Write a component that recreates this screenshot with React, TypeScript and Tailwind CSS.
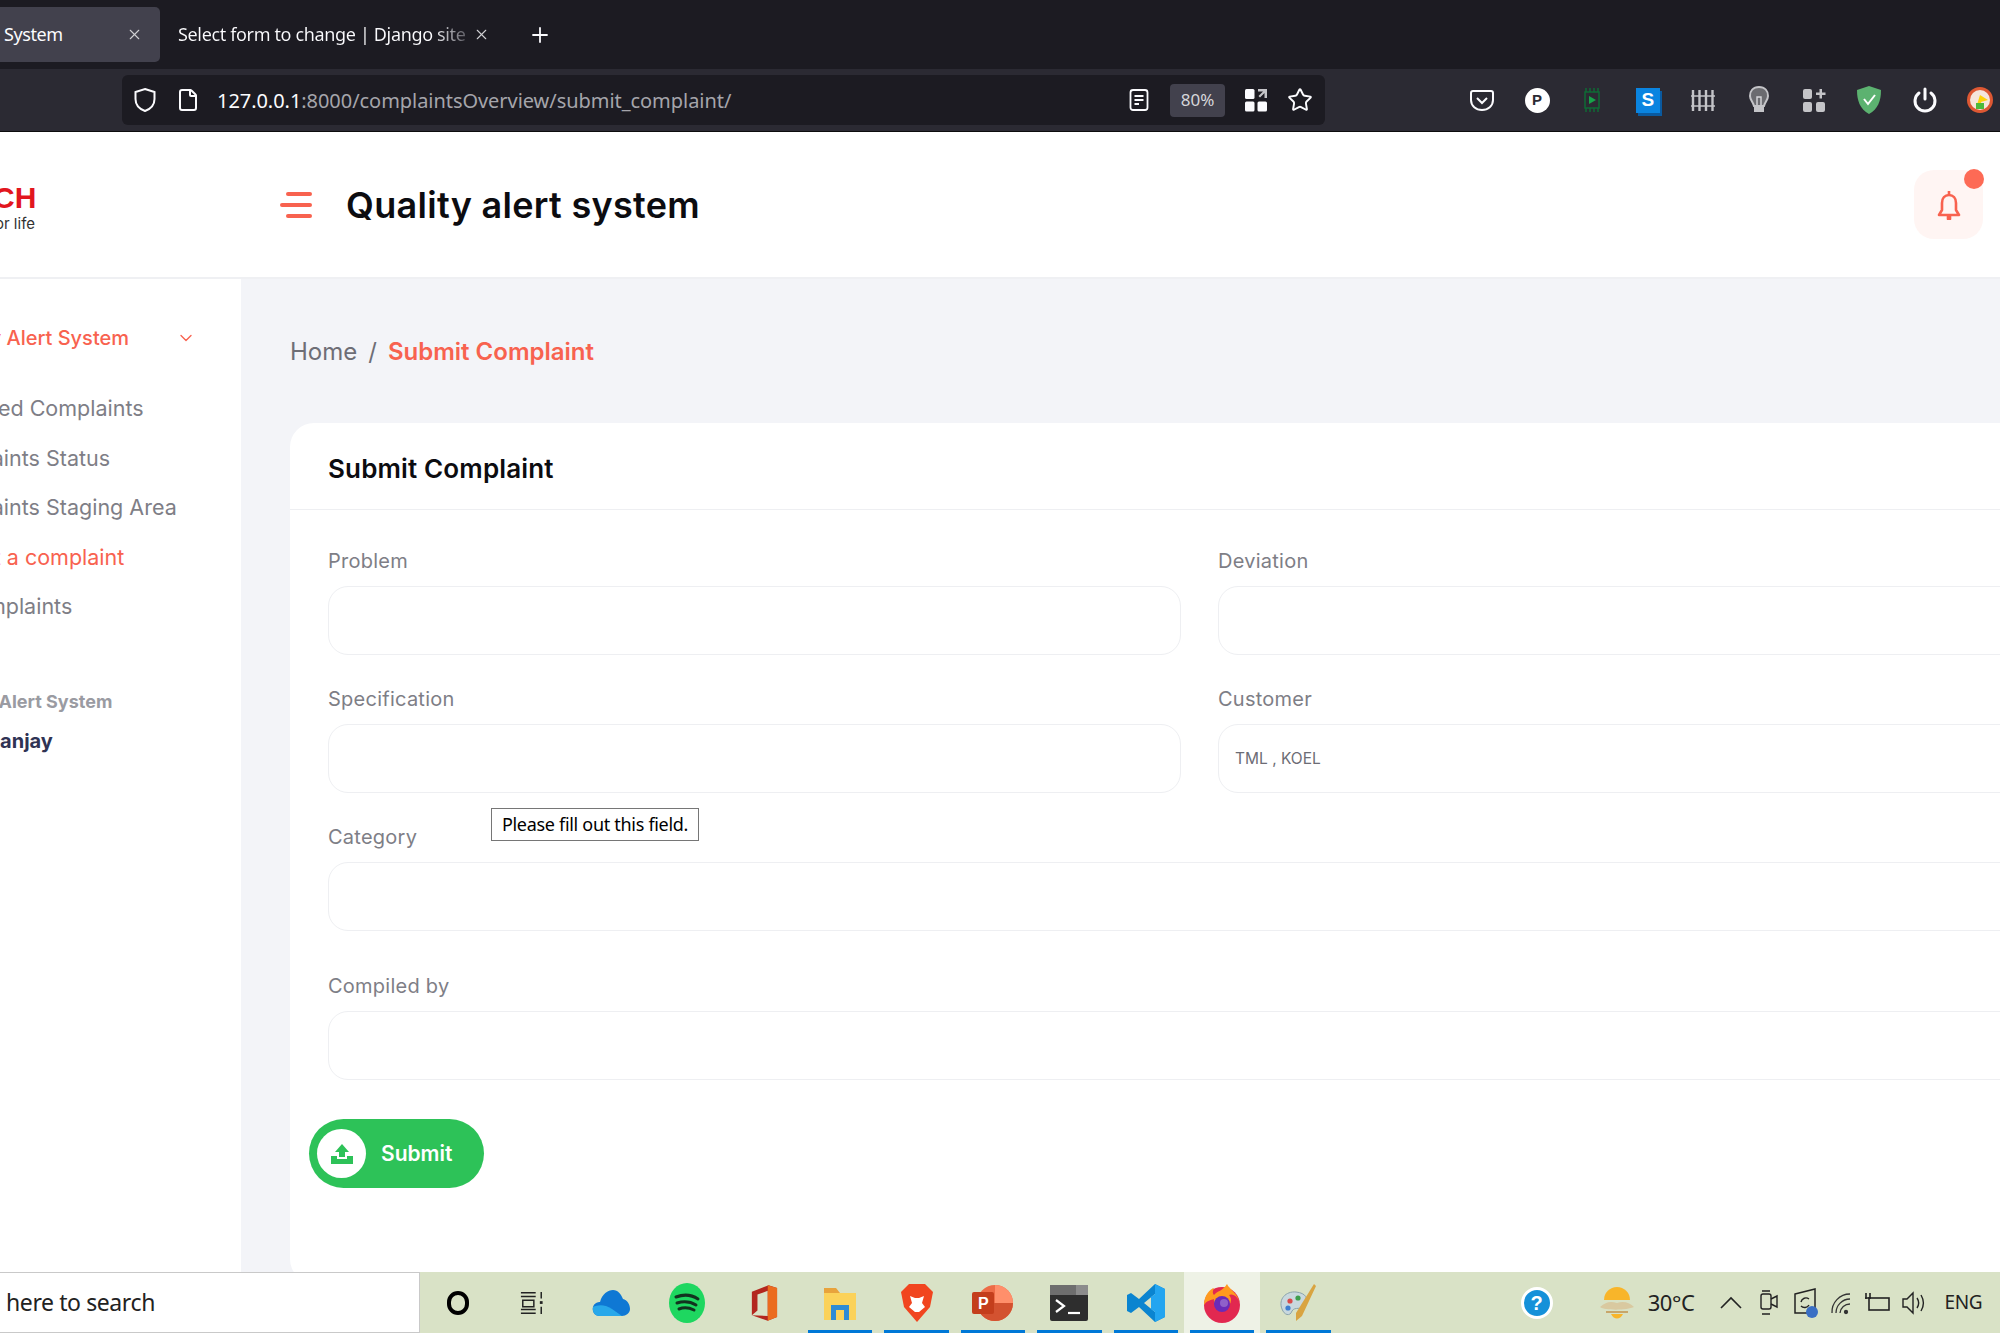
import { ChevronDown, File, Plus, Star, X } from "lucide-react";

const ui = "font-['Noto_Sans',sans-serif]";
const page = "font-['Inter',sans-serif]";

function ShieldIcon({ className = "" }: { className?: string }) {
  return (
    <svg className={className} width="24" height="26" viewBox="0 0 24 26" fill="none">
      <path d="M12 2 L21.5 5 V12 C21.5 18 17.5 22 12 24 C6.5 22 2.5 18 2.5 12 V5 Z" stroke="#fbfbfe" strokeWidth="2" />
    </svg>
  );
}

function ToolbarIcons() {
  return (
    <div className="flex items-center ml-[129px]">
      <Slot>
        <svg width="26" height="26" viewBox="0 0 26 26" fill="none">
          <path d="M4 4 H22 Q24 4 24 6 V13 C24 19 19 23 13 23 C7 23 2 19 2 13 V6 Q2 4 4 4 Z" stroke="#fbfbfe" strokeWidth="2" />
          <path d="M8 11 L13 16 L18 11" stroke="#fbfbfe" strokeWidth="2" />
        </svg>
      </Slot>
      <Slot>
        <div className="w-[25px] h-[25px] rounded-full bg-white flex items-center justify-center text-[15px] font-bold text-[#2b2a33] font-['Liberation_Sans',sans-serif]">P</div>
      </Slot>
      <Slot>
        <svg width="20" height="26" viewBox="0 0 20 26" fill="none">
          <rect x="3" y="5" width="14" height="16" stroke="#0f6b36" strokeWidth="1.5" />
          <path d="M4 1 V5 M8 1 V5 M12 1 V5 M16 1 V5 M4 21 V25 M8 21 V25 M12 21 V25 M16 21 V25" stroke="#0f6b36" strokeWidth="1.5" />
          <path d="M7 9 L14 13 L7 17 Z" fill="#17a34a" />
        </svg>
      </Slot>
      <Slot>
        <div className="w-[24px] h-[25px] bg-[#0a84e0] shadow-[2px_3px_0_#0a5aa0] flex items-center justify-center text-white font-extrabold text-[19px] font-['Liberation_Sans',sans-serif]">S</div>
      </Slot>
      <Slot>
        <svg width="26" height="26" viewBox="0 0 26 26" fill="none" stroke="#c4c4c8" strokeWidth="2.4">
          <path d="M3 3 V24 M9.5 3 V24 M16 3 V24 M22.5 3 V24" />
          <path d="M1 9 H25 M1 19 H25" strokeWidth="1.6" />
        </svg>
      </Slot>
      <Slot>
        <svg width="22" height="30" viewBox="0 0 22 30" fill="none">
          <path d="M11 2 C5 2 2 6 2 11 C2 15 5 17 6 21 H16 C17 17 20 15 20 11 C20 6 17 2 11 2 Z" fill="#6b6b70" stroke="#c4c4c8" strokeWidth="2" />
          <rect x="6" y="21" width="10" height="6" fill="#c4c4c8" />
          <path d="M9 20 V12 H13 V20" stroke="#d8d8dc" strokeWidth="1.4" />
        </svg>
      </Slot>
      <Slot>
        <svg width="24" height="24" viewBox="0 0 24 24" fill="#c4c4c8">
          <rect x="1" y="1" width="9" height="10" rx="2" />
          <rect x="1" y="14" width="9" height="10" rx="2" />
          <rect x="14" y="14" width="9" height="10" rx="2" />
          <path d="M17.5 1 H20 V4.5 H23.5 V7 H20 V10.5 H17.5 V7 H14 V4.5 H17.5 Z" />
        </svg>
      </Slot>
      <Slot>
        <svg width="26" height="30" viewBox="0 0 26 30">
          <path d="M13 1 L25 5 C25 16 22 24 13 29 C4 24 1 16 1 5 Z" fill="#5cb270" />
          <path d="M8 14 L12 19 L19 10" stroke="#fff" strokeWidth="2" fill="none" />
        </svg>
      </Slot>
      <Slot>
        <svg width="24" height="26" viewBox="0 0 24 26" fill="none" stroke="#fbfbfe" strokeWidth="3" strokeLinecap="round">
          <path d="M12 2 V12" />
          <path d="M6 6 A10 10 0 1 0 18 6" />
        </svg>
      </Slot>
      <Slot>
        <svg width="26" height="26" viewBox="0 0 26 26">
          <circle cx="13" cy="13" r="13" fill="#de5833" />
          <circle cx="13" cy="13" r="10" fill="#f5e6dc" />
          <path d="M13 8 L21 13 L14 15 L16 21 H9 Z" fill="#fdd20a" />
          <path d="M9 16 H17 V22 H9 Z" fill="#4cba3c" />
        </svg>
      </Slot>
    </div>
  );
}

function Slot({ children }: { children: React.ReactNode }) {
  return <div className="w-[55.4px] h-[40px] flex items-center justify-center shrink-0">{children}</div>;
}

function BrowserChrome() {
  return (
    <div className={`${ui} shrink-0`}>
      <div className="h-[69px] bg-[#1c1b22] flex items-center">
        <div className="w-[160px] h-[55px] bg-[#42414d] rounded-r-[5px] flex items-center justify-between pl-[4px] pr-[17px] text-[18px] text-[#fbfbfe]">
          <span className="tracking-[-0.4px]">System</span>
          <X size={17} strokeWidth={1.5} className="text-[#d0d0d4]" />
        </div>
        <div className="w-[340px] flex items-center pl-[18px] text-[18px] text-[#fbfbfe]">
          <span className="w-[290px] overflow-hidden whitespace-nowrap tracking-[-0.35px] bg-clip-text text-transparent bg-gradient-to-r from-[#fbfbfe] from-[88%] to-[#55545c]">Select form to change | Django site</span>
          <X size={17} strokeWidth={1.5} className="ml-[5px] text-[#d0d0d4]" />
        </div>
        <Plus size={24} strokeWidth={1.8} className="ml-[28px] text-[#fbfbfe]" />
      </div>
      <div className="h-[63px] bg-[#2b2a33] flex items-center border-b border-[#0c0c0d]">
        <div className="ml-[122px] w-[1203px] h-[50px] rounded-[6px] bg-[#1c1b22] flex items-center shrink-0">
          <ShieldIcon className="ml-[11px]" />
          <File size={24} strokeWidth={2} className="ml-[19px] text-[#fbfbfe]" />
          <span className="ml-[17px] pt-[2px] text-[20px] tracking-[-0.05px] text-[#fbfbfe]">
            127.0.0.1<span className="text-[#a5a5ab]">:8000/complaintsOverview/submit_complaint/</span>
          </span>
          <svg className="ml-auto" width="20" height="24" viewBox="0 0 20 24" fill="none" stroke="#fbfbfe" strokeWidth="1.8">
            <rect x="1.5" y="2" width="17" height="20" rx="2.5" />
            <path d="M5.5 8 H14.5 M5.5 12 H14.5 M5.5 16 H10" />
          </svg>
          <div className="ml-[21px] w-[55px] h-[33px] rounded-[4px] bg-[#42414d] flex items-center justify-center text-[17px] text-[#d6d6da]">80%</div>
          <svg className="ml-[19px]" width="24" height="24" viewBox="0 0 24 24" fill="#fbfbfe">
            <rect x="1" y="1" width="9.5" height="10" rx="1.5" />
            <rect x="1" y="13.5" width="9.5" height="10" rx="1.5" />
            <rect x="13.5" y="13.5" width="9.5" height="10" rx="1.5" />
            <path d="M14 1 H23 V10 H20.5 V5 L16 9.5 L14.5 8 L19 3.5 H14 Z" fill="#c4c4c8" />
          </svg>
          <Star size={26} strokeWidth={1.8} className="ml-[19px] mr-[12px] text-[#fbfbfe]" />
        </div>
        <ToolbarIcons />
      </div>
    </div>
  );
}

function Header() {
  return (
    <div className={`${page} h-[147px] shrink-0 bg-white flex items-center border-b-2 border-[#eff0f3]`}>
      <div className="w-[280px] shrink-0 overflow-hidden pt-[6px]">
        <div className="ml-[-7px] text-[30px] leading-[29px] font-black text-[#e2161e] font-['Liberation_Sans',sans-serif]">CH</div>
        <div className="ml-[-5px] mt-[3px] text-[15px] leading-[18px] text-[#333]">or life</div>
      </div>
      <div className="flex flex-col gap-[7px] w-[32px] items-end">
        <div className="h-[4px] w-[26px] bg-[#f8624f] rounded-full" />
        <div className="h-[4px] w-[32px] bg-[#f8624f] rounded-full" />
        <div className="h-[4px] w-[26px] bg-[#f8624f] rounded-full" />
      </div>
      <h1 className="ml-[34px] text-[36px] font-semibold text-[#0c0c10] tracking-[0.3px]">Quality alert system</h1>
      <div className="ml-auto mr-[17px] relative w-[69px] h-[69px] rounded-[20px] bg-[#fff5f3] flex items-center justify-center">
        <svg width="26" height="30" viewBox="0 0 26 30" fill="none" stroke="#f8624f" strokeWidth="2.6" strokeLinejoin="round">
          <path d="M13 1 V4 M6 13 C6 8 9 5 13 5 C17 5 20 8 20 13 V20 L23 25 H3 L6 20 Z M12 25 V29 H14 V25" />
        </svg>
        <span className="absolute top-[-1px] right-[-1px] w-[20px] h-[20px] rounded-full bg-[#fd6a55]" />
      </div>
    </div>
  );
}

function Sidebar() {
  const links = [
    { text: "Rejected Complaints", off: "ml-[-65px]" },
    { text: "Complaints Status", off: "ml-[-74px]" },
    { text: "Complaints Staging Area", off: "ml-[-74px]" },
    { text: "Submit a complaint", off: "ml-[-70px]", active: true },
    { text: "All Complaints", off: "ml-[-73px]" },
  ];
  return (
    <aside className={`${page} w-[241px] shrink-0 bg-white overflow-hidden pt-[44px] whitespace-nowrap`}>
      <div className="flex items-center h-[30px] text-[#f8624f] font-medium text-[20px]">
        <span className="ml-[-130px] w-[259px] shrink-0 text-right">Quality Alert System</span>
        <ChevronDown size={20} strokeWidth={1.6} className="ml-[47px]" />
      </div>
      <div className="mt-[40px] flex flex-col gap-[19.5px]">
        {links.map(l => (
          <div key={l.text} className={`${l.off} h-[30px] leading-[30px] text-[21.5px] ${l.active ? "text-[#f8624f]" : "text-[#7e7e86]"}`}>{l.text}</div>
        ))}
      </div>
      <div className="mt-[66px] ml-[-69px] text-[18px] leading-[30px] font-bold text-[#9a9ba2]">Quality Alert System</div>
      <div className="mt-[9px] ml-[-13px] text-[20px] leading-[30px] font-bold text-[#2f3354]">Sanjay</div>
    </aside>
  );
}

function Field({ label, value, className = "", children }: { label: string; value?: string; className?: string; children?: React.ReactNode }) {
  return (
    <div className={`relative ${className}`}>
      <div className="h-[25px] leading-[25px] text-[20px] tracking-[0.25px] text-[#7e7e86]">{label}</div>
      {children}
      <div className="mt-[12px] h-[69px] rounded-[20px] border border-[#eeeff2] bg-white flex items-center px-[16px] text-[15.5px] text-[#6c6c75]">{value}</div>
    </div>
  );
}

function Main() {
  return (
    <main className={`${page} flex-1 min-w-0 bg-[#f3f4f8] pl-[49px] overflow-hidden`}>
      <div className="pt-[58px] h-[144px] flex text-[24px] leading-[30px] whitespace-nowrap">
        <span className="text-[#6e6e76]">Home</span>
        <span className="mx-[11px] text-[#6e6e76]">/</span>
        <span className="font-semibold text-[#f8624f]">Submit Complaint</span>
      </div>
      <section className="w-[1900px] h-[860px] bg-white rounded-[24px]">
        <div className="h-[87px] flex items-center pl-[38px] pt-[5px] border-b border-[#eeeff2] text-[26px] font-semibold tracking-[0.15px] text-[#0c0c10]">Submit Complaint</div>
        <div className="px-[38px] pt-[39px]">
          <div className="grid grid-cols-[853px_853px] gap-x-[37px] gap-y-[32px]">
            <Field label="Problem" />
            <Field label="Deviation" />
            <Field label="Specification" />
            <Field label="Customer" value="TML , KOEL" />
          </div>
          <Field label="Category" className="mt-[32px]">
            <div className="absolute left-[163px] top-[-17px] h-[33px] w-[208px] border border-[#767676] bg-white text-black text-[18px] leading-[31px] text-center whitespace-nowrap font-['Noto_Sans',sans-serif] tracking-[-0.3px]">Please fill out this field.</div>
          </Field>
          <Field label="Compiled by" className="mt-[43px]" />
          <button className="mt-[39px] ml-[-19px] w-[175px] h-[69px] rounded-full bg-[#2dc258] flex items-center pl-[8px] text-white text-[21px] font-semibold">
            <span className="w-[49px] h-[49px] rounded-full bg-white flex items-center justify-center">
              <svg width="22" height="20" viewBox="0 0 22 20" fill="#2dc258">
                <path d="M11 0 L18 8 H14 V13 H8 V8 H4 Z" />
                <path d="M0 12 H6 V15 H16 V12 H22 V20 H0 Z" />
              </svg>
            </span>
            <span className="ml-[15px]">Submit</span>
          </button>
        </div>
      </section>
    </main>
  );
}

function Task({ children, line = false, active = false }: { children: React.ReactNode; line?: boolean; active?: boolean }) {
  return (
    <div className={`relative w-[76.4px] h-full shrink-0 flex items-center justify-center ${active ? "bg-[#eef2e6]" : ""}`}>
      {children}
      {line && <span className="absolute bottom-0 left-[6px] right-[6px] h-[3px] bg-[#0078d7]" />}
    </div>
  );
}

function Taskbar() {
  return (
    <div className={`${ui} h-[61px] shrink-0 flex bg-[#d9e2c6]`}>
      <div className="w-[420px] shrink-0 bg-white border-y border-[#c9c9c9] border-r flex items-center pl-[6px] text-[23px] text-[#222] tracking-[-0.4px]">here to search</div>
      <Task>
        <div className="w-[22px] h-[24px] rounded-full border-[4px] border-black" />
      </Task>
      <Task>
        <svg className="mr-[6px]" width="24" height="28" viewBox="0 0 26 28" fill="none" stroke="#222" strokeWidth="1.6">
          <path d="M1 3 H17 M1 7 H17 M1 21 H17 M1 25 H17 M3 11 H15 V18 H3 Z M23 2 V9 M23 18 V26" />
          <rect x="21.5" y="12" width="3" height="3" fill="#222" stroke="none" />
        </svg>
      </Task>
      <Task>
        <svg width="38" height="28" viewBox="0 0 38 28">
          <path d="M8 27 C2 27 0 22 1 18 C2 14 6 13 8 13 C10 5 16 1 21 1 C26 1 29 5 31 10 C35 11 38 15 38 20 C38 24 34 27 30 27 Z" fill="#0f78d4" />
          <path d="M8 27 C2 27 0 22 1 18 C6 16 12 15 20 20 L30 27 Z" fill="#28a8ea" />
        </svg>
      </Task>
      <Task>
        <svg width="36" height="40" viewBox="0 0 36 40">
          <ellipse cx="18" cy="20" rx="18" ry="20" fill="#1ed760" />
          <path d="M7 14 C15 11 23 12 29 16 M8 20 C15 18 22 19 27 22 M10 26 C15 24 21 25 25 27" stroke="#12331f" strokeWidth="3" fill="none" strokeLinecap="round" />
        </svg>
      </Task>
      <Task>
        <svg width="28" height="40" viewBox="0 0 30 40">
          <path d="M2 8 L20 1 L29 4 V35 L19 39 L2 33 L19 34 V7 L8 11 V28 L2 33 Z" fill="#b3261e" />
          <path d="M19 1 L29 4 V35 L19 39 Z" fill="#eb6c1f" />
        </svg>
      </Task>
      <Task line>
        <svg width="34" height="34" viewBox="0 0 34 34">
          <path d="M1 2 H13 L17 7 H1 Z" fill="#e8a33c" />
          <rect x="1" y="7" width="32" height="27" fill="#fbd25a" />
          <path d="M8 34 V19 H26 V34 H21 V24 H13 V34 Z" fill="#2f8bd4" />
        </svg>
      </Task>
      <Task line>
        <svg width="34" height="40" viewBox="0 0 34 40">
          <path d="M9 1 H25 L29 5 L33 9 L30 24 L17 39 L4 24 L1 9 L5 5 Z" fill="#f1451f" />
          <path d="M10 13 L15 15 H19 L24 13 L22 20 L25 24 L19 29 H15 L9 24 L12 20 Z" fill="#fff" />
        </svg>
      </Task>
      <Task line>
        <svg width="42" height="38" viewBox="0 0 42 38">
          <circle cx="23" cy="19" r="18" fill="#ed6c47" />
          <path d="M23 1 A18 18 0 0 1 41 19 H23 Z" fill="#ff8f6b" />
          <path d="M23 37 A18 18 0 0 1 5 19 H41 A18 18 0 0 1 23 37 Z" fill="#d35230" />
          <rect x="0" y="8" width="22" height="22" rx="2" fill="#c43e1c" />
          <text x="6" y="25" fontSize="16" fontWeight="700" fill="#fff" fontFamily="Liberation Sans">P</text>
        </svg>
      </Task>
      <Task line>
        <svg width="38" height="36" viewBox="0 0 38 36">
          <rect width="38" height="36" rx="2" fill="#2e2e2e" />
          <rect width="38" height="10" fill="#6e6e6e" />
          <rect x="26" width="12" height="10" fill="#8c8c8c" />
          <path d="M6 15 L14 21 L6 27" stroke="#fff" strokeWidth="2.2" fill="none" />
          <path d="M18 28 H30" stroke="#fff" strokeWidth="2.2" />
        </svg>
      </Task>
      <Task line>
        <svg width="40" height="40" viewBox="0 0 40 40">
          <path d="M29 1 L39 6 V34 L29 39 L13 24 L5 30 L1 28 V12 L5 10 L13 16 Z M29 11 L18 20 L29 29 Z" fill="#0a84d0" />
          <path d="M29 1 L39 6 V34 L29 39 Z M29 11 V29 L25 26 V14 Z" fill="#23a5f0" />
        </svg>
      </Task>
      <Task line active>
        <svg width="38" height="40" viewBox="0 0 38 40">
          <circle cx="19" cy="22" r="18" fill="#e22850" />
          <path d="M1 22 C1 12 7 6 11 5 C9 9 10 11 11 12 C14 8 20 8 24 1 C26 6 36 11 37 22 C36 14 30 10 26 12 C30 16 28 24 20 25 C14 25 10 20 11 16 C8 17 3 18 1 22 Z" fill="#ff9a1f" />
          <circle cx="19" cy="21" r="8" fill="#6a2bb8" />
          <circle cx="21" cy="20" r="4" fill="#fff" opacity="0.25" />
        </svg>
      </Task>
      <Task line>
        <svg width="38" height="40" viewBox="0 0 38 40">
          <path d="M3 26 C-1 16 7 8 17 9 C27 10 30 16 26 22 C22 28 16 23 13 28 C11 34 5 32 3 26 Z" fill="#c9d8de" stroke="#8ba4ad" />
          <circle cx="11" cy="18" r="2.6" fill="#d94b4b" />
          <circle cx="19" cy="15" r="2.6" fill="#3f9e4d" />
          <circle cx="9" cy="25" r="2.6" fill="#3e7fd1" />
          <path d="M35 1 L37 3 L23 33 L17 38 L17 30 Z" fill="#d9a441" />
        </svg>
      </Task>
      <div className="flex-1 flex items-center text-[#222]">
        <div className="ml-[184px] w-[32px] h-[32px] rounded-full bg-[#1591d9] border-[3px] border-white flex items-center justify-center text-white font-bold text-[20px] font-['Liberation_Sans',sans-serif]">?</div>
        <svg className="ml-[45px]" width="38" height="36" viewBox="0 0 38 36">
          <path d="M6 15 A13 13 0 0 1 32 15 Z" fill="#f8b52a" />
          <path d="M2 22 C8 17 12 16 19 18 C25 16 31 17 36 22 C30 25 8 26 2 22 Z" fill="#d9c9a0" />
          <path d="M8 27 H30" stroke="#c8a66a" strokeWidth="2" />
          <path d="M13 29 C16 35 22 35 25 29 Z" fill="#f8b52a" />
        </svg>
        <span className="ml-[12px] text-[22px] tracking-[-0.4px]">30°C</span>
        <svg className="ml-[25px]" width="22" height="13" viewBox="0 0 22 13" fill="none" stroke="#222" strokeWidth="1.6"><path d="M1 12 L11 2 L21 12" /></svg>
        <svg className="ml-[17px]" width="20" height="28" viewBox="0 0 20 28" fill="none" stroke="#222" strokeWidth="1.4">
          <rect x="2" y="5" width="10" height="15" rx="2" />
          <path d="M12 10 L18 7 V18 L12 15 M3 2 H11 M3 25 H11" />
        </svg>
        <svg className="ml-[14px]" width="26" height="30" viewBox="0 0 26 30" fill="none">
          <path d="M2 6 L22 1 V25 H2 Z" stroke="#222" strokeWidth="1.5" />
          <path d="M8 14 A5 5 0 0 1 16 11 M16 17 A5 5 0 0 1 8 18" stroke="#222" strokeWidth="1.4" />
          <circle cx="19" cy="24" r="6" fill="#3a6fc4" />
        </svg>
        <svg className="ml-[9px]" width="24" height="24" viewBox="0 0 24 24" fill="none" stroke="#333" strokeWidth="1.3">
          <path d="M4 22 A18 18 0 0 1 22 3 M8 22 A14 14 0 0 1 22 8 M12 22 A10 10 0 0 1 22 13" />
          <circle cx="18" cy="21" r="1.5" fill="#333" />
        </svg>
        <svg className="ml-[12px]" width="26" height="24" viewBox="0 0 26 24" fill="none" stroke="#222" strokeWidth="1.6">
          <rect x="5" y="7" width="20" height="12" />
          <path d="M2 2 V8 M6 2 V7 M1 7 H7" />
        </svg>
        <svg className="ml-[11px]" width="26" height="26" viewBox="0 0 26 26" fill="none" stroke="#222" strokeWidth="1.4">
          <path d="M2 9 H6 L12 3 V23 L6 17 H2 Z M16 8 C18 11 18 15 16 18 M20 5 C23 10 23 16 20 21" />
        </svg>
        <span className="ml-[18px] text-[19px] tracking-[-0.4px]">ENG</span>
      </div>
    </div>
  );
}

export default function App() {
  return (
    <div className="w-[2000px] h-[1333px] overflow-hidden flex flex-col bg-white">
      <BrowserChrome />
      <Header />
      <div className="flex-1 min-h-0 flex">
        <Sidebar />
        <Main />
      </div>
      <Taskbar />
    </div>
  );
}
